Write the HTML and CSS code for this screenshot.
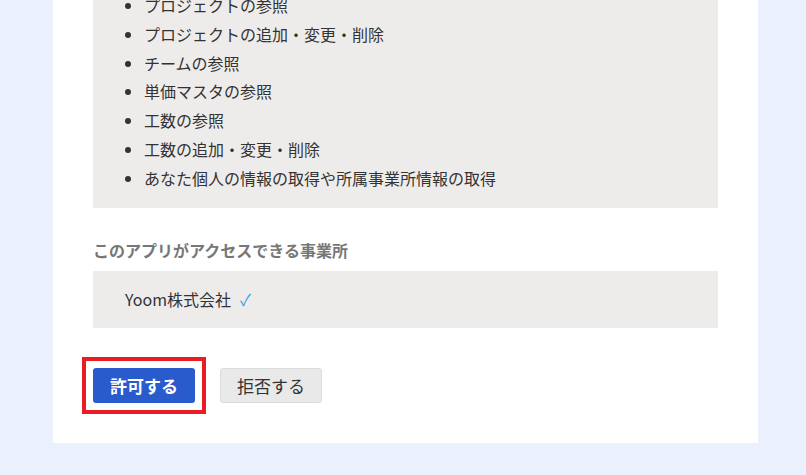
FILE: index.html
```html
<!DOCTYPE html>
<html lang="ja">
<head>
<meta charset="utf-8">
<link rel="stylesheet" href="styles.css">
</head>
<body>
<div class="page">
  <div class="card">
    <div class="scopes">
      <ul class="scope-list">
        <li>プロジェクトの参照</li>
        <li>プロジェクトの追加・変更・削除</li>
        <li>チームの参照</li>
        <li>単価マスタの参照</li>
        <li>工数の参照</li>
        <li>工数の追加・変更・削除</li>
        <li>あなた個人の情報の取得や所属事業所情報の取得</li>
      </ul>
    </div>
    <h3 class="section-title">このアプリがアクセスできる事業所</h3>
    <div class="office-box">
      <span class="office-name">Yoom株式会社</span><span class="check">✓</span>
    </div>
    <div class="actions">
      <span class="highlight"><button class="btn btn-allow">許可する</button></span>
      <button class="btn btn-deny">拒否する</button>
    </div>
  </div>
</div>
</body>
</html>
```

FILE: styles.css
```css
html, body {
  margin: 0;
  padding: 0;
  background: #eaf1fd;
  font-family: "Noto Sans CJK JP", "Noto Sans", sans-serif;
  color: #333;
  overflow: hidden;
}
.page {
  display: flex;
  padding-left: 53px;
  height: 475px;
  align-items: flex-start;
}
.card {
  width: 705px;
  background: #fff;
  padding: 0 40px 40px;
  box-sizing: border-box;
  margin-top: -40px;
}
.scopes {
  background: #eeeceb;
  padding: 31px 0 15px;
}
.scope-list {
  margin: 0;
  padding-left: 51px;
  font-size: 16px;
  line-height: 28.8px;
}
.section-title {
  margin: 33px 0 12px;
  font-size: 16px;
  line-height: 18px;
  font-weight: 700;
  color: #777;
}
.office-box {
  background: #eeeceb;
  height: 57px;
  display: flex;
  align-items: center;
  padding-left: 32px;
  font-size: 16px;
}
.check {
  color: #3aa2e8;
  margin-left: 9px;
  font-size: 16px;
}
.actions {
  display: flex;
  gap: 25px;
  margin-top: 40px;
}
.highlight {
  position: relative;
  display: flex;
}
.highlight::after {
  content: "";
  position: absolute;
  inset: -11px;
  border: 4px solid #e81c24;
  pointer-events: none;
}
.btn {
  font-family: inherit;
  font-size: 17px;
  width: 102px;
  height: 35px;
  border-radius: 3px;
  padding: 0;
  cursor: pointer;
}
.btn-allow {
  background: #2a5bcd;
  color: #fff;
  font-weight: 700;
  border: none;
}
.btn-deny {
  background: #e9e9e9;
  border: 1px solid #dcdcdc;
  color: #333;
}
```
